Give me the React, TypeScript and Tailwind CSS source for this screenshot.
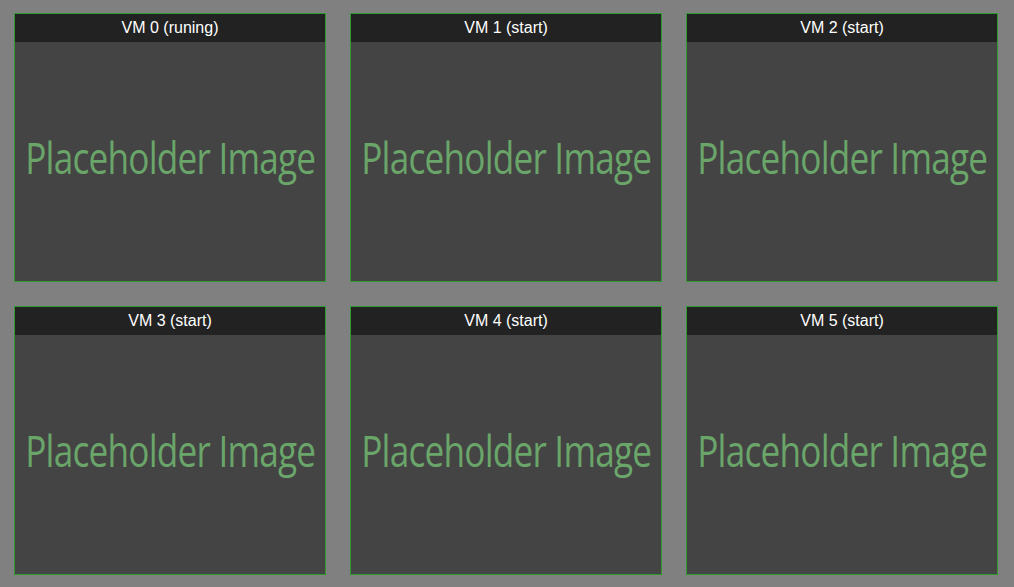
import React from 'react';

const vms = [
  { id: 0, status: 'runing' },
  { id: 1, status: 'start' },
  { id: 2, status: 'start' },
  { id: 3, status: 'start' },
  { id: 4, status: 'start' },
  { id: 5, status: 'start' },
];

const VmCard: React.FC<{ id: number; status: string }> = ({ id, status }) => (
  <div className="flex flex-col border border-[#2f9a2f] bg-[#444444]">
    <div className="h-[28px] bg-[#222222] flex items-center justify-center text-white text-[16px] font-['Liberation_Sans',Arial,sans-serif]">
      VM {id} ({status})
    </div>
    <div className="h-[239px] flex items-center justify-center overflow-hidden pb-[10px]">
      <span className="text-[#6aa56a] text-[44px] tracking-[-1px] font-['Open_Sans',sans-serif] whitespace-nowrap scale-x-[0.8]">
        Placeholder Image
      </span>
    </div>
  </div>
);

export default function App() {
  return (
    <div className="w-[1014px] h-[587px] bg-[#808080] overflow-hidden">
      <div className="grid grid-cols-[repeat(3,312px)] gap-6 pl-[14px] pt-[13px]">
        {vms.map(vm => (
          <VmCard key={vm.id} id={vm.id} status={vm.status} />
        ))}
      </div>
    </div>
  );
}
